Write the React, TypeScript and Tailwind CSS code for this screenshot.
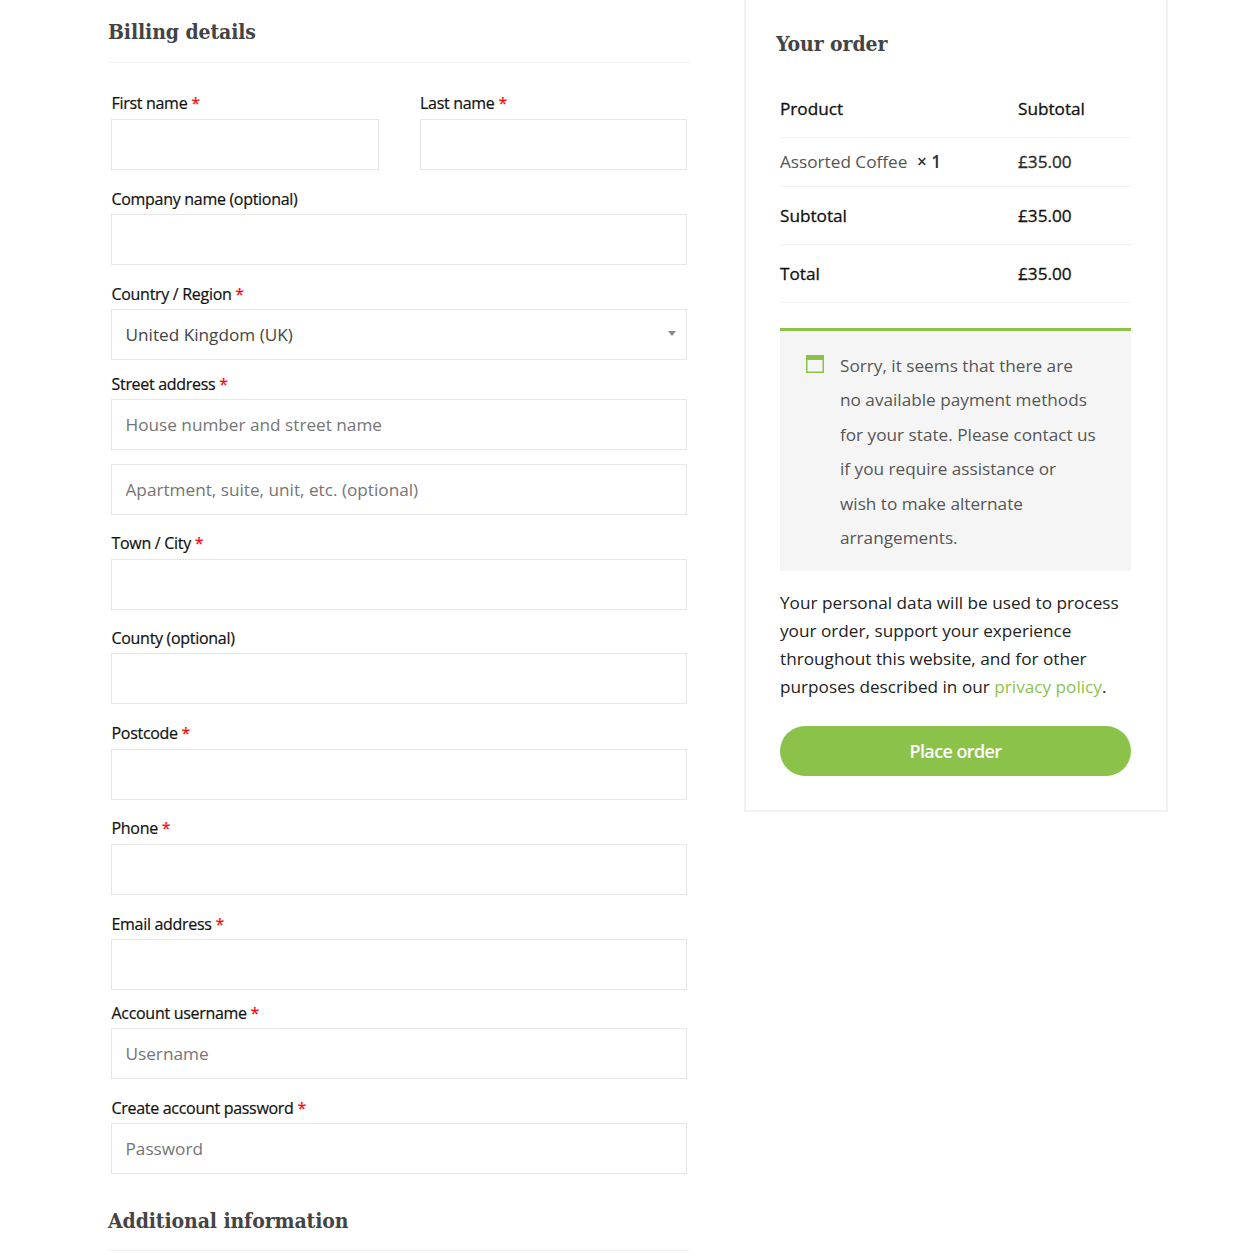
import type { ReactNode } from "react";

const sans = "font-['Open_Sans',sans-serif]";
const heading = "font-['DejaVu_Serif_Condensed',serif] text-[21px] leading-[34px] font-bold tracking-[-0.1px] text-[#444]";
const strong = "text-[17.2px] text-[#111] [-webkit-text-stroke:0.3px_#111]";

function Field({
  label,
  required,
  low,
  placeholder,
  className,
  children,
}: {
  label: string;
  required?: boolean;
  low?: boolean; // label sits 1px lower on these rows
  placeholder?: string;
  className?: string;
  children?: ReactNode;
}) {
  return (
    <div className={className}>
      <label
        className={`block h-[28px] pl-[0.5px] text-[16px] text-[#111] tracking-[-0.3px] [-webkit-text-stroke:0.2px_#111] ${
          low ? "leading-[26px]" : "leading-[24px]"
        }`}
      >
        {label}
        {required && <span className="text-[#f00] [-webkit-text-stroke:0.2px_#f00]"> *</span>}
      </label>
      {children ?? (
        <input
          placeholder={placeholder}
          className="block w-full h-[51px] border border-[#e6e6e6] bg-white px-[13.5px] text-[17.2px] placeholder:text-[#757575] outline-none"
        />
      )}
    </div>
  );
}

function OrderRow({ label }: { label: string }) {
  return (
    <div className="flex items-center h-[58px] border-b border-[#f0f0f0]">
      <div className={`w-[238px] ${strong}`}>{label}</div>
      <div className={strong}>£35.00</div>
    </div>
  );
}

export default function App() {
  return (
    <div className={`flex w-[1250px] h-[1258px] overflow-hidden bg-white ${sans}`}>
      {/* Billing column */}
      <div className="ml-[108px] w-[582px] shrink-0">
        <h3 className={`h-[63px] border-b border-[#f2f2f2] pt-[15px] ${heading}`}>Billing details</h3>
        <div className="mx-[3px] mt-[28px]">
          <div className="flex gap-[41px]">
            <Field label="First name" required className="flex-1" />
            <Field label="Last name" required className="flex-1" />
          </div>
          <Field label="Company name (optional)" low className="mt-[16px]" />
          <Field label="Country / Region" required low className="mt-[16px]">
            <div className="relative flex items-center h-[51px] border border-[#e6e6e6] bg-white px-[13.5px] text-[17.2px] text-[#444]">
              United Kingdom (UK)
              <span className="absolute right-[10px] top-[21px] w-0 h-0 border-x-[4px] border-x-transparent border-t-[5px] border-t-[#888]" />
            </div>
          </Field>
          <Field label="Street address" required low placeholder="House number and street name" className="mt-[11px]" />
          <input
            placeholder="Apartment, suite, unit, etc. (optional)"
            className="block w-full h-[51px] mt-[14px] border border-[#e6e6e6] bg-white px-[13.5px] text-[17.2px] placeholder:text-[#757575] outline-none"
          />
          <Field label="Town / City" required className="mt-[16px]" />
          <Field label="County (optional)" low className="mt-[15px]" />
          <Field label="Postcode" required className="mt-[17px]" />
          <Field label="Phone" required className="mt-[16px]" />
          <Field label="Email address" required low className="mt-[16px]" />
          <Field label="Account username" required low placeholder="Username" className="mt-[10px]" />
          <Field label="Create account password" required low placeholder="Password" className="mt-[16px]" />
        </div>
        <h3 className={`h-[77px] border-b border-[#f2f2f2] pt-[30px] ${heading}`}>Additional information</h3>
      </div>

      {/* Order column */}
      <div className="ml-[54px] w-[424px] h-[812px] shrink-0 border-x-2 border-b-2 border-[#f0f0f0] pl-[34px] pr-[35px]">
        <h3 className={`-ml-[4px] pt-[27px] ${heading}`}>Your order</h3>
        <div className="mt-[20px] flex items-center h-[57px] border-b border-[#f0f0f0]">
          <div className={`w-[238px] ${strong}`}>Product</div>
          <div className={strong}>Subtotal</div>
        </div>
        <div className="flex items-center h-[49px] border-b border-[#f0f0f0]">
          <div className="w-[238px] text-[17.2px] text-[#555]">
            Assorted Coffee <span className="ml-[5px] font-semibold text-[#333]">× 1</span>
          </div>
          <div className={`${strong} text-[#333]`}>£35.00</div>
        </div>
        <OrderRow label="Subtotal" />
        <OrderRow label="Total" />

        <div className="mt-[25px] flex border-t-[3px] border-[#8bc34a] bg-[#f5f5f5] h-[243px] pl-[26px] pr-[34px] pt-[18px]">
          <svg width="18" height="18" viewBox="0 0 18 18" className="mt-[6px] shrink-0">
            <rect x="0.75" y="0.75" width="16.5" height="16.5" fill="#f5f5f5" stroke="#8bc34a" strokeWidth="1.5" />
            <rect x="0" y="0" width="18" height="5" fill="#8bc34a" />
          </svg>
          <p className="ml-[16px] text-[17.2px] leading-[34.4px] text-[#555]">
            Sorry, it seems that there are no available payment methods for your state. Please contact us if you require assistance or
            <br />
            wish to make alternate arrangements.
          </p>
        </div>

        <p className="mt-[18px] text-[17.2px] leading-[28px] text-[#222]">
          Your personal data will be used to process your order, support your experience throughout this website, and for other purposes described in our{" "}
          <a className="text-[#8bc34a]">privacy policy</a>.
        </p>

        <button className="mt-[25px] block w-full h-[50px] pt-[1px] rounded-full bg-[#8bc34a] text-white text-[18px] font-semibold tracking-[-0.6px]">
          Place order
        </button>
      </div>
    </div>
  );
}
